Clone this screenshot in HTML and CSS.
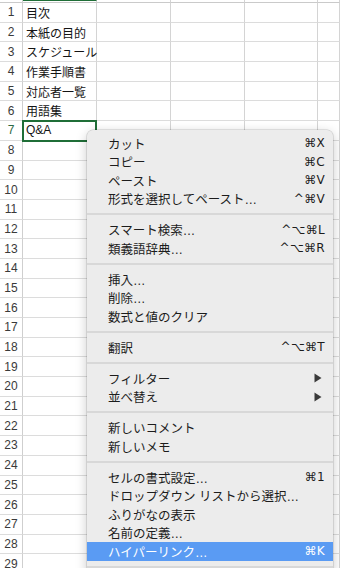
FILE: index.html
```html
<!DOCTYPE html>
<html lang="ja">
<head>
<meta charset="utf-8">
<link rel="stylesheet" href="styles.css">
</head>
<body>
<div class="sheet">
  <div class="row top"><div class="rh"></div><div class="c a"></div><div class="c"></div><div class="c"></div><div class="c"></div><div class="c"></div></div>
  <div class="row"><div class="rh">1</div><div class="c">目次</div><div class="c"></div><div class="c"></div><div class="c"></div><div class="c"></div></div>
  <div class="row"><div class="rh">2</div><div class="c">本紙の目的</div><div class="c"></div><div class="c"></div><div class="c"></div><div class="c"></div></div>
  <div class="row"><div class="rh">3</div><div class="c">スケジュール</div><div class="c"></div><div class="c"></div><div class="c"></div><div class="c"></div></div>
  <div class="row"><div class="rh">4</div><div class="c">作業手順書</div><div class="c"></div><div class="c"></div><div class="c"></div><div class="c"></div></div>
  <div class="row"><div class="rh">5</div><div class="c">対応者一覧</div><div class="c"></div><div class="c"></div><div class="c"></div><div class="c"></div></div>
  <div class="row"><div class="rh">6</div><div class="c">用語集</div><div class="c"></div><div class="c"></div><div class="c"></div><div class="c"></div></div>
  <div class="row"><div class="rh selrh">7</div><div class="c sel">Q&amp;A</div><div class="c"></div><div class="c"></div><div class="c"></div><div class="c"></div></div>
  <div class="row"><div class="rh">8</div><div class="c"></div><div class="c"></div><div class="c"></div><div class="c"></div><div class="c"></div></div>
  <div class="row"><div class="rh">9</div><div class="c"></div><div class="c"></div><div class="c"></div><div class="c"></div><div class="c"></div></div>
  <div class="row"><div class="rh">10</div><div class="c"></div><div class="c"></div><div class="c"></div><div class="c"></div><div class="c"></div></div>
  <div class="row"><div class="rh">11</div><div class="c"></div><div class="c"></div><div class="c"></div><div class="c"></div><div class="c"></div></div>
  <div class="row"><div class="rh">12</div><div class="c"></div><div class="c"></div><div class="c"></div><div class="c"></div><div class="c"></div></div>
  <div class="row"><div class="rh">13</div><div class="c"></div><div class="c"></div><div class="c"></div><div class="c"></div><div class="c"></div></div>
  <div class="row"><div class="rh">14</div><div class="c"></div><div class="c"></div><div class="c"></div><div class="c"></div><div class="c"></div></div>
  <div class="row"><div class="rh">15</div><div class="c"></div><div class="c"></div><div class="c"></div><div class="c"></div><div class="c"></div></div>
  <div class="row"><div class="rh">16</div><div class="c"></div><div class="c"></div><div class="c"></div><div class="c"></div><div class="c"></div></div>
  <div class="row"><div class="rh">17</div><div class="c"></div><div class="c"></div><div class="c"></div><div class="c"></div><div class="c"></div></div>
  <div class="row"><div class="rh">18</div><div class="c"></div><div class="c"></div><div class="c"></div><div class="c"></div><div class="c"></div></div>
  <div class="row"><div class="rh">19</div><div class="c"></div><div class="c"></div><div class="c"></div><div class="c"></div><div class="c"></div></div>
  <div class="row"><div class="rh">20</div><div class="c"></div><div class="c"></div><div class="c"></div><div class="c"></div><div class="c"></div></div>
  <div class="row"><div class="rh">21</div><div class="c"></div><div class="c"></div><div class="c"></div><div class="c"></div><div class="c"></div></div>
  <div class="row"><div class="rh">22</div><div class="c"></div><div class="c"></div><div class="c"></div><div class="c"></div><div class="c"></div></div>
  <div class="row"><div class="rh">23</div><div class="c"></div><div class="c"></div><div class="c"></div><div class="c"></div><div class="c"></div></div>
  <div class="row"><div class="rh">24</div><div class="c"></div><div class="c"></div><div class="c"></div><div class="c"></div><div class="c"></div></div>
  <div class="row"><div class="rh">25</div><div class="c"></div><div class="c"></div><div class="c"></div><div class="c"></div><div class="c"></div></div>
  <div class="row"><div class="rh">26</div><div class="c"></div><div class="c"></div><div class="c"></div><div class="c"></div><div class="c"></div></div>
  <div class="row"><div class="rh">27</div><div class="c"></div><div class="c"></div><div class="c"></div><div class="c"></div><div class="c"></div></div>
  <div class="row"><div class="rh">28</div><div class="c"></div><div class="c"></div><div class="c"></div><div class="c"></div><div class="c"></div></div>
  <div class="row"><div class="rh">29</div><div class="c"></div><div class="c"></div><div class="c"></div><div class="c"></div><div class="c"></div></div>
</div>

<div class="menu">
  <div class="item"><span>カット</span><span class="key">⌘X</span></div>
  <div class="item"><span>コピー</span><span class="key">⌘C</span></div>
  <div class="item"><span>ペースト</span><span class="key">⌘V</span></div>
  <div class="item"><span>形式を選択してペースト…</span><span class="key">^⌘V</span></div>
  <div class="sep"></div>
  <div class="item"><span>スマート検索…</span><span class="key">^⌥⌘L</span></div>
  <div class="item"><span>類義語辞典…</span><span class="key">^⌥⌘R</span></div>
  <div class="sep"></div>
  <div class="item"><span>挿入…</span></div>
  <div class="item"><span>削除…</span></div>
  <div class="item"><span>数式と値のクリア</span></div>
  <div class="sep"></div>
  <div class="item"><span>翻訳</span><span class="key">^⌥⌘T</span></div>
  <div class="sep"></div>
  <div class="item"><span>フィルター</span><svg class="arrow" width="8" height="10" viewBox="0 0 8 10"><polygon points="0.5,0.5 7.5,5 0.5,9.5" fill="#3a3a3a"/></svg></div>
  <div class="item"><span>並べ替え</span><svg class="arrow" width="8" height="10" viewBox="0 0 8 10"><polygon points="0.5,0.5 7.5,5 0.5,9.5" fill="#3a3a3a"/></svg></div>
  <div class="sep"></div>
  <div class="item"><span>新しいコメント</span></div>
  <div class="item"><span>新しいメモ</span></div>
  <div class="sep"></div>
  <div class="item"><span>セルの書式設定…</span><span class="key">⌘1</span></div>
  <div class="item"><span>ドロップダウン リストから選択…</span></div>
  <div class="item"><span>ふりがなの表示</span></div>
  <div class="item"><span>名前の定義…</span></div>
  <div class="item hl"><span>ハイパーリンク…</span><span class="key">⌘K</span></div>
  <div class="sep"></div>
</div>
</body>
</html>
```

FILE: styles.css
```css
html, body {
  margin: 0;
  padding: 0;
  background: #ffffff;
  overflow: hidden;
}

body {
  width: 340px;
  height: 568px;
  position: relative;
}

.sheet {
  display: flex;
  flex-direction: column;
}

.row {
  display: grid;
  grid-template-columns: 23px 74px 74px 74px 73px 1fr;
  height: 19.7px;
}

.row.top {
  height: 3px;
}

.rh, .c {
  box-sizing: border-box;
  border-right: 1px solid #d4d4d4;
  border-bottom: 1px solid #dcdcdc;
  display: flex;
  align-items: center;
  overflow: visible;
  white-space: nowrap;
}

.rh {
  justify-content: center;
  font-family: "Liberation Sans", Arial, sans-serif;
  font-size: 12px;
  color: #3a3a3a;
  border-right-color: #cfcfcf;
}

.rh.selrh {
  color: #2d6a45;
}

.c {
  padding-left: 3px;
  font-family: "Noto Sans CJK JP", sans-serif;
  font-size: 12px;
  color: #141414;
}

.top .c, .top .rh {
  border-bottom-color: #cacaca;
}

.top .c.a {
  border-top: 1px solid #1f6e37;
}

.c.sel {
  position: relative;
  font-family: "Liberation Sans", "Noto Sans CJK JP", sans-serif;
}

.c.sel::after {
  content: "";
  position: absolute;
  top: -1px;
  left: -1px;
  right: -1px;
  bottom: -2px;
  border: 2px solid #1f6e37;
}

.menu {
  position: absolute;
  left: 87px;
  top: 130px;
  width: 246px;
  padding: 4px 0;
  background: #ececec;
  border-radius: 6px;
  box-shadow: 0 0 0 0.5px rgba(0, 0, 0, 0.18), 0 3px 12px rgba(0, 0, 0, 0.22);
  font-family: "Liberation Sans", "Noto Sans CJK JP", sans-serif;
  font-size: 12.5px;
  color: #1c1c1c;
}

.item {
  height: 18.5px;
  display: flex;
  align-items: center;
  justify-content: space-between;
  padding: 0 8px 0 21px;
  white-space: nowrap;
}

.item.hl {
  background: #5a9bf3;
  color: #ffffff;
}

.key {
  font-family: "DejaVu Sans", "Liberation Sans", sans-serif;
  font-size: 12px;
  letter-spacing: 0.3px;
}

.arrow {
  margin-right: 3px;
}

.sep {
  height: 12.5px;
  display: flex;
  align-items: center;
}

.sep::before {
  content: "";
  flex: 1;
  height: 2px;
  background: #d8d8d8;
}
```
